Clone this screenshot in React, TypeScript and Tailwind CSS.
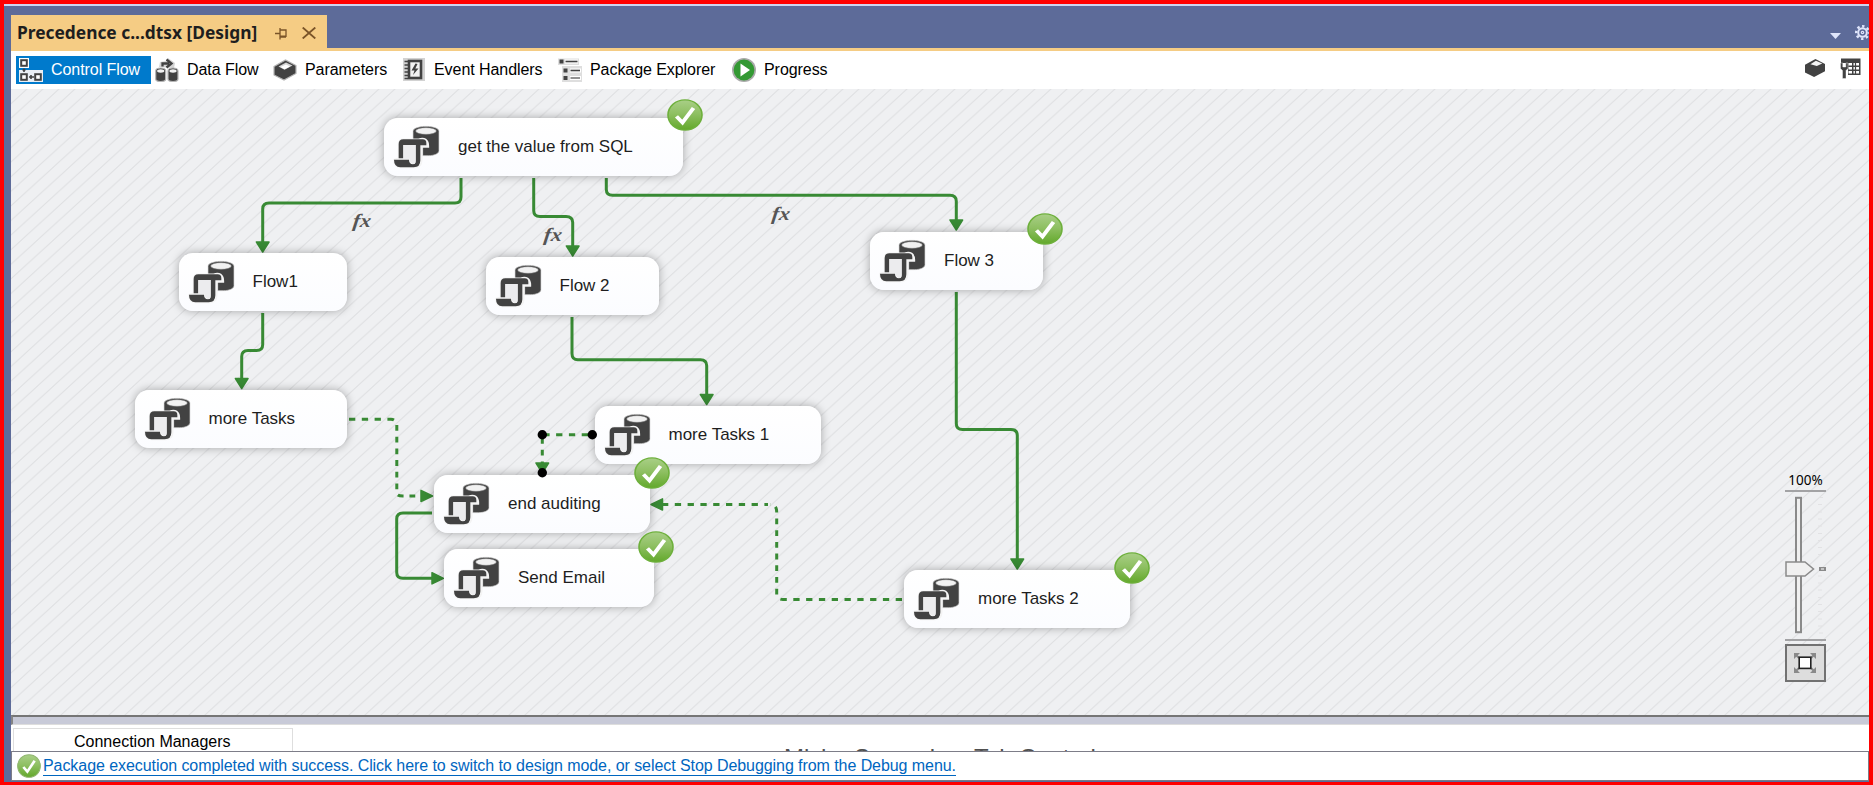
import React from "react";

type TaskNode = { label: string; x: number; y: number; w: number; done?: boolean };

const GREEN = "#388a34";

const nodes: TaskNode[] = [
  { label: "get the value from SQL", x: 384, y: 117.5, w: 299, done: true },
  { label: "Flow1", x: 178.5, y: 253, w: 168.5 },
  { label: "Flow 2", x: 485.5, y: 257, w: 173.5 },
  { label: "Flow 3", x: 870, y: 231.5, w: 172.5, done: true },
  { label: "more Tasks", x: 134.5, y: 390, w: 212.5 },
  { label: "more Tasks 1", x: 594.5, y: 406, w: 226 },
  { label: "end auditing", x: 434, y: 475, w: 216, done: true },
  { label: "Send Email", x: 444, y: 549, w: 210, done: true },
  { label: "more Tasks 2", x: 904, y: 570, w: 226, done: true },
];

function TaskIcon() {
  return (
    <svg width="50" height="44" viewBox="66 104 150 132" className="shrink-0">
      <path d="M129 123 C129 103 207 103 207 123 V181 C207 191 190 196 176 196 H158 V148 H129 Z" fill="#424242" stroke="#d8d8d8" strokeWidth="2" />
      <ellipse cx="168" cy="122" rx="31" ry="10" fill="#f1f1f1" stroke="#8a8a8a" strokeWidth="1.5" />
      <path d="M86 204 V161 Q86 147 100 147 H146 C162 140 176 148 175 170 H155 V210 Q154 231 136 231 H91 Q72 230 72 208 Z" fill="#f4f4f4" stroke="#f4f4f4" strokeWidth="5" />
      <path d="M86 204 V161 Q86 147 100 147 H158 Q169 147 169 158 V165 H151 V210 Q151 231 131 231 H91 Q72 230 72 208 H117 Q117 221 129 222 Q137 222 137 212 V164 H100 V204 Z" fill="#424242" />
      <path d="M100 164 H137 V211 Q137 221 130 221 Q120 220 118 206 H100 Z" fill="#ececee" />
    </svg>
  );
}

function CheckBadge({ w, h, id, muted }: { w: number; h: number; id: string; muted?: boolean }) {
  return (
    <svg width={w} height={h} viewBox="0 0 36 36" preserveAspectRatio="none" className="block shrink-0">
      <defs>
        <linearGradient id={id} x1="0" y1="0" x2="0" y2="1">
          <stop offset="0" stopColor="#a9cf87" />
          <stop offset="0.45" stopColor="#8fc063" />
          <stop offset="1" stopColor="#62a82a" />
        </linearGradient>
      </defs>
      <circle cx="18" cy="18" r="17" fill={`url(#${id})`} stroke={muted ? "#8fb56e" : "#6eb03c"} strokeWidth="1.6" />
      <path d="M9.5 19.5 L15.5 26.5 L26.5 10" fill="none" stroke="#fff" strokeWidth="4" strokeLinecap="butt" />
    </svg>
  );
}

function Connectors() {
  return (
    <svg className="absolute inset-0" width="1858" height="626" viewBox="11 89 1858 626">
      <defs>
        <pattern id="hatch" x="13" y="715" width="16" height="14.6" patternUnits="userSpaceOnUse">
          <path d="M-4 18.25 L20 -3.65 M-4 3.65 L4 -3.65 M12 18.25 L20 10.95" stroke="#dfe0e2" strokeWidth="1.1" fill="none" />
        </pattern>
      </defs>
      <rect x="11" y="89" width="1858" height="626" fill="url(#hatch)" />
      <g fill="none" stroke={GREEN} strokeWidth="3">
        <path d="M461 178 V197 Q461 203 455 203 H269 Q262.7 203 262.7 209 V243" />
        <path d="M533.7 178 V210.5 Q533.7 216.5 540 216.5 H566 Q572.7 216.5 572.7 222.5 V246" />
        <path d="M606.3 178 V189.3 Q606.3 195.3 612.5 195.3 H950 Q956.3 195.3 956.3 201.3 V222" />
        <path d="M262.7 313 V344.5 Q262.7 350.5 256.5 350.5 H248 Q241.7 350.5 241.7 356.5 V380" />
        <path d="M572 317 V353.7 Q572 359.7 578 359.7 H700.5 Q706.7 359.7 706.7 365.7 V396" />
        <path d="M956.3 292 V423.5 Q956.3 429.5 962.5 429.5 H1011 Q1017.3 429.5 1017.3 435.5 V560" />
        <path d="M432 513 H403 Q396.7 513 396.7 519 V572.3 Q396.7 578.3 403 578.3 H434" />
      </g>
      <g fill="none" stroke={GREEN} strokeWidth="3">
        <path d="M349 419.3 H391 Q394 419.3 395 421" strokeDasharray="6.3 6.5" />
        <path d="M396.8 425 V493 Q396.8 496 403 496 H422" strokeDasharray="5.8 5.9" />
        <path d="M588 434.7 H546" strokeDasharray="6.3 6.5" />
        <path d="M542.3 438 V465" strokeDasharray="5.8 5.9" />
        <path d="M902 599.5 H783 Q779 599.5 778 597" strokeDasharray="6.3 6.5" />
        <path d="M776.7 594.5 V512 Q776.7 504.5 770 504.5" strokeDasharray="5.8 5.9" />
        <path d="M663 504.5 H768" strokeDasharray="6.3 6.5" strokeDashoffset="1" />
      </g>
      <g fill={GREEN} stroke={GREEN} strokeWidth="1.5" strokeLinejoin="round">
        <path d="M256.4 242 H269 L262.7 252 Z" />
        <path d="M566.4 246 H579 L572.7 256 Z" />
        <path d="M950 220 H962.6 L956.3 230 Z" />
        <path d="M235.4 378.5 H248 L241.7 388.5 Z" />
        <path d="M700.4 394.5 H713 L706.7 404.5 Z" />
        <path d="M1011 559 H1023.6 L1017.3 569 Z" />
        <path d="M536 463 H548.6 L542.3 473 Z" />
        <path d="M421 490.4 V501.6 L432.5 496 Z" />
        <path d="M432 572.7 V583.9 L443.5 578.3 Z" />
        <path d="M662.5 498.9 V510.1 L651 504.5 Z" />
      </g>
    </svg>
  );
}

function FxLabel({ className }: { className: string }) {
  return (
    <span className={`absolute origin-left scale-x-115 skew-x-[-6deg] font-['Liberation_Serif',serif] text-[19px] leading-5 font-bold text-[#555555] italic ${className}`}>fx</span>
  );
}

function ControlFlowIcon() {
  return (
    <svg width="24" height="24" viewBox="0 0 24 24">
      <rect x="0" y="0" width="10" height="10" fill="#fff" />
      <rect x="0" y="12" width="24" height="12" fill="#e9eef4" />
      <rect x="2.2" y="2.2" width="5.6" height="5.6" fill="#fff" stroke="#424242" strokeWidth="2" />
      <rect x="2.2" y="16.2" width="5.6" height="5.6" fill="#fff" stroke="#424242" strokeWidth="2" />
      <rect x="16.2" y="16.2" width="5.6" height="5.6" fill="#fff" stroke="#424242" strokeWidth="2" />
      <path d="M3.5 12 H6.5 M5 10.5 V14 M15 19 H10 M12 17 V21" stroke="#424242" strokeWidth="1.6" />
    </svg>
  );
}

function DataFlowIcon() {
  return (
    <svg width="24" height="24" viewBox="0 0 24 24">
      <path d="M4 9 L5 4 L11 3 L13 0 L20 5 L19 10 Z" fill="#d4d4d4" />
      <path d="M7.5 8.5 V5.5 H14 M11.5 1.5 L16.5 5.5 L11.5 9.5" fill="none" stroke="#424242" strokeWidth="2.3" />
      {[0.7, 13].map((x) => (
        <g key={x}>
          <path d={`M${x} 13 Q${x} 10 ${x + 5} 10 Q${x + 10} 10 ${x + 10} 13 V21 Q${x + 10} 23.5 ${x + 5} 23.5 Q${x} 23.5 ${x} 21 Z`} fill="#424242" stroke="#b5b5b5" strokeWidth="1.2" />
          <ellipse cx={x + 5} cy="13" rx="3.6" ry="1.7" fill="#f2f2f2" />
        </g>
      ))}
    </svg>
  );
}

function BoxIcon() {
  return (
    <svg width="24" height="22" viewBox="0 0 24 22">
      <path d="M1 7.5 L12.5 1 L23 6.5 V14.5 L11 21 L1 16 Z" fill="#424242" stroke="#b5b5b5" strokeWidth="1.2" />
      <path d="M5.5 7.5 L13 3.5 L19.5 6.5 L11.5 10.8 Z" fill="#d5d5d5" />
      <path d="M7.5 8 L13 5.4 L17 7.4 L11.5 10.2 Z" fill="#fff" />
    </svg>
  );
}

function EventIcon() {
  return (
    <svg width="22" height="24" viewBox="0 0 22 24">
      <rect x="0" y="0" width="22" height="23" fill="#d2d2d2" />
      <rect x="6" y="3" width="12" height="17" fill="#f3f3f3" stroke="#424242" strokeWidth="2.6" />
      <path d="M1.5 3.5 H5 M1.5 7 H5 M1.5 10.5 H5 M1.5 14 H5 M1.5 17.5 H5 M1.5 20.5 H5" stroke="#424242" strokeWidth="1.5" />
      <path d="M12.5 5.5 L8.5 12.5 H11.5 L10 17 L15.5 10.5 H12.3 L14.5 6 Z" fill="#424242" />
    </svg>
  );
}

function ExplorerIcon() {
  return (
    <svg width="24" height="24" viewBox="0 0 24 24">
      <path d="M0 .5 H21 V7 H0 Z M4 8 H24 V24 H4 Z" fill="#dedede" />
      <path d="M7 3.5 H20 M12 12.5 H23 M12 20 H23" stroke="#fff" strokeWidth="4" />
      <path d="M7.5 3.5 H19.5" stroke="#424242" strokeWidth="1.6" />
      <path d="M12.5 12.5 H22" stroke="#424242" strokeWidth="1.6" />
      <path d="M12.5 20 H22" stroke="#777" strokeWidth="1.6" />
      <path d="M1.5 1.5 H5.5 V5.5 H1.5 Z M5.5 10.5 H9.5 V14.5 H5.5 Z M5.5 18 H9.5 V22 H5.5 Z" fill="#424242" />
    </svg>
  );
}

function ProgressIcon() {
  return (
    <svg width="24" height="24" viewBox="0 0 24 24">
      <circle cx="12" cy="12" r="12" fill="#a9a9a9" />
      <circle cx="12" cy="12" r="10.4" fill="#339933" />
      <path d="M8.5 5.5 L18 12 L8.5 18.5 Z" fill="#fff" />
    </svg>
  );
}

function TableWrenchIcon() {
  return (
    <svg width="21" height="21" viewBox="0 0 21 21">
      <path d="M1 0.5 H20.5 V17 H8 V5 H1 Z" fill="#424242" />
      <path d="M8.5 5 H12 V7.5 H8.5 Z M13.5 5 H19 V7.5 H13.5 Z M8.5 9 H12 V11.5 H8.5 Z M13.5 9 H19 V11.5 H13.5 Z M8.5 13 H12 V15.5 H8.5 Z M13.5 13 H19 V15.5 H13.5 Z" fill="#fff" />
      <path d="M15.5 4 V17" stroke="#424242" strokeWidth="1.2" />
      <path d="M0.5 5 V10.5 L2.5 12.5 V20.5 H6 V12.5 L8 10.5 V5 H5.8 V9 H2.8 V5 Z" fill="#424242" stroke="#fff" strokeWidth="0.4" />
    </svg>
  );
}

function ToolbarTab({ icon, label, className }: { icon: React.ReactNode; label: string; className: string }) {
  return (
    <div className={`flex h-7 shrink-0 items-center ${className}`}>
      {icon}
      <span className="tracking-[-0.06px] whitespace-nowrap">{label}</span>
    </div>
  );
}

function ZoomControl() {
  return (
    <div className="absolute top-[383px] left-[1774px] flex w-[41px] flex-col items-center">
      <div className="flex h-[18px] w-full items-center justify-center font-['Noto_Sans',sans-serif] text-[13.5px] leading-none text-black">100%</div>
      <div className="h-[2px] w-full bg-[#a3a3a5]" />
      <svg width="41" height="147" viewBox="1785 492 41 147">
        <rect x="1796" y="497.8" width="5" height="134.4" fill="#f0f0f0" stroke="#8a8a8a" strokeWidth="2" />
        <path d="M1819 497.5 h4 M1818 504.5 h4 M1818 512 h4 M1818 519 h4 M1818 526 h4 M1818 533.5 h4 M1818 540.5 h4 M1818 547.5 h4 M1818 554.5 h4 M1818 576 h4 M1818 583 h4 M1818 590 h4 M1818 597.5 h4 M1818 604.5 h4 M1818 611.5 h4 M1818 619 h4 M1818 626 h4 M1819 633 h4" stroke="#e2e2e4" />
        <path d="M1786 562 H1805 L1813.5 569 L1805 576 H1786 Z" fill="#f0f0f0" stroke="#8a8a8a" strokeWidth="1.5" />
        <rect x="1819" y="567" width="7" height="4" fill="#8a8a8a" />
        <rect x="1821" y="568.3" width="3" height="1.4" fill="#ddd" />
      </svg>
      <div className="h-[2px] w-full bg-[#a3a3a5]" />
      <div className="mt-[3px] flex h-[38px] w-full items-center justify-center border-2 border-[#727272] bg-[#dddddd]">
        <svg width="24" height="22" viewBox="0 0 24 22" className="mr-[2px]">
          <path d="M1 7 V1 H7 L1 7 Z M17 1 H23 V7 Z M1 15 V21 H7 Z M17 21 H23 V15 Z" fill="#8a8a8a" />
          <path d="M3 3 L6 6 M21 3 L18 6 M3 19 L6 16 M21 19 L18 16" stroke="#8a8a8a" strokeWidth="2" />
          <rect x="6.2" y="5.2" width="11.6" height="11.2" fill="#fff" stroke="#222" strokeWidth="1.6" />
        </svg>
      </div>
    </div>
  );
}

export default function App() {
  return (
    <div className="flex h-[785px] w-[1873px] flex-col overflow-hidden border-4 border-b-[3px] border-[#ff0000] bg-[#5d6b99] font-['Liberation_Sans',Arial,sans-serif] text-[16px] text-black">
      <div className="h-[2px] shrink-0 bg-[#ccd5f0]" />
      <div className="flex min-h-0 flex-1 flex-col pl-[7px]">
        <header className="flex h-[42px] shrink-0 items-end justify-between">
          <div className="flex h-[33px] w-[316px] items-center bg-[#f5cc84] pt-[3px] pl-[6px] text-[#1e1e1e]">
            <span className="w-[258px] font-['Noto_Sans',sans-serif] text-[17.35px] leading-none font-bold whitespace-nowrap">Precedence c...dtsx [Design]</span>
            <svg width="12" height="12" viewBox="0 0 12 12" className="mt-[1px]" fill="none" stroke="#7a5428" strokeWidth="1.3">
              <path d="M0 5.5 H5 M5 0 V11.5 M5 2 H11 V9 M5 8.2 H11 M5 9.2 H11" />
            </svg>
            <svg width="14" height="12" viewBox="0 0 14 12" className="ml-[15px]" fill="none" stroke="#7a5428" strokeWidth="1.8">
              <path d="M.7 .5 L13.3 11.5 M13.3 .5 L.7 11.5" />
            </svg>
          </div>
          <div className="flex h-8 items-center overflow-hidden">
            <svg width="11" height="6" viewBox="0 0 11 6" className="mt-[7px] mr-[14px]">
              <path d="M0 0 H11 L5.5 6 Z" fill="#dfe5fb" />
            </svg>
            <svg width="14" height="15" viewBox="0 0 14 15" className="mt-[1px] overflow-hidden" fill="none" stroke="#dfe5fb">
              <circle cx="7.5" cy="7.5" r="4.3" strokeWidth="2" />
              <circle cx="7.5" cy="7.5" r="6.3" strokeWidth="2.4" strokeDasharray="2.4 2.55" strokeDashoffset="1.2" />
              <circle cx="7.5" cy="7.5" r="1.2" strokeWidth="1.2" />
            </svg>
          </div>
        </header>
        <div className="h-[3px] shrink-0 bg-[#f5cc84]" />

        <nav className="flex h-[38px] shrink-0 items-start bg-white pt-[5px]">
          <ToolbarTab icon={<ControlFlowIcon />} label="Control Flow" className="ml-[5px] w-[135px] gap-[8px] bg-[#007acc] pl-[3px] text-white" />
          <ToolbarTab icon={<DataFlowIcon />} label="Data Flow" className="w-[117px] gap-[8px] pl-[4px]" />
          <ToolbarTab icon={<BoxIcon />} label="Parameters" className="w-[135px] gap-[8px] pl-[5px]" />
          <ToolbarTab icon={<EventIcon />} label="Event Handlers" className="w-[155px] gap-[9px]" />
          <ToolbarTab icon={<ExplorerIcon />} label="Package Explorer" className="w-[174px] gap-[8px]" />
          <ToolbarTab icon={<ProgressIcon />} label="Progress" className="gap-[8px]" />
          <div className="flex-1" />
          <div className="mt-[2px] mr-[8px] flex gap-[14px]">
            <svg width="22" height="20" viewBox="0 0 24 22">
              <path d="M1 7.5 L12.5 1 L23 6.5 V14.5 L11 21 L1 16 Z" fill="#424242" />
              <path d="M7 6.8 L13 3 L20 6 L14 8.8 Z" fill="#f4f4f4" />
            </svg>
            <TableWrenchIcon />
          </div>
        </nav>

        <main className="relative h-[626px] shrink-0 overflow-hidden bg-[#eff0f2]">
          <Connectors />
          <FxLabel className="top-[122px] left-[342px]" />
          <FxLabel className="top-[136px] left-[533px]" />
          <FxLabel className="top-[115px] left-[761px]" />
          {nodes.map((n) => (
            <div
              key={n.label}
              className="absolute flex h-[58px] items-center gap-[16px] rounded-[14px] bg-linear-to-b from-white to-[#fbfcff] pl-[8px] text-[17px] text-[#1e1e1e] shadow-[0_0_8px_1px_rgba(0,0,0,0.26)]"
              style={{ left: n.x - 11, top: n.y - 89, width: n.w }}
            >
              <TaskIcon />
              <span className="whitespace-nowrap">{n.label}</span>
            </div>
          ))}
          {nodes.filter((n) => n.done).map((n) => (
            <div key={n.label} className="absolute" style={{ left: n.x + n.w - 27, top: n.y - 107.5 }}>
              <CheckBadge w={36} h={32} id={`badge-${n.x}`} />
            </div>
          ))}
          <svg className="absolute inset-0" width="1858" height="626" viewBox="11 89 1858 626">
            <circle cx="592.3" cy="434.7" r="4.7" />
            <circle cx="542.3" cy="434.7" r="4.7" />
            <circle cx="542.3" cy="472.7" r="4.7" />
          </svg>
          <ZoomControl />
        </main>

        <div className="h-[10px] shrink-0 border-t-2 border-b border-l-2 border-t-[#757575] border-b-[#dddddd] border-l-[#858585] bg-[#c8cad8]" />
        <section className="flex h-[26px] shrink-0 overflow-hidden bg-white pt-[3px] pl-[2px]">
          <div className="h-[30px] w-[280px] shrink-0 border border-[#dedede] pt-[4px] pl-[60px] leading-[18px]">Connection Managers</div>
          <div className="ml-[491px] flex h-[23px] items-start gap-[6px] overflow-hidden pt-[16px] text-[24px] leading-[27px] tracking-[-0.1px] whitespace-nowrap text-[#505050]">Misha Secondary Tab Control</div>
        </section>
        <footer className="flex h-[30px] shrink-0 items-center border border-[#7d7d88] bg-white pl-[5px]">
          <CheckBadge w={24} h={24} id="badge-status" muted />
          <a className="ml-[2px] border-b border-[#0066bf] leading-[19px] tracking-[-0.068px] whitespace-nowrap text-[#0066bf]">
            Package execution completed with success. Click here to switch to design mode, or select Stop Debugging from the Debug menu.
          </a>
        </footer>
      </div>
    </div>
  );
}
